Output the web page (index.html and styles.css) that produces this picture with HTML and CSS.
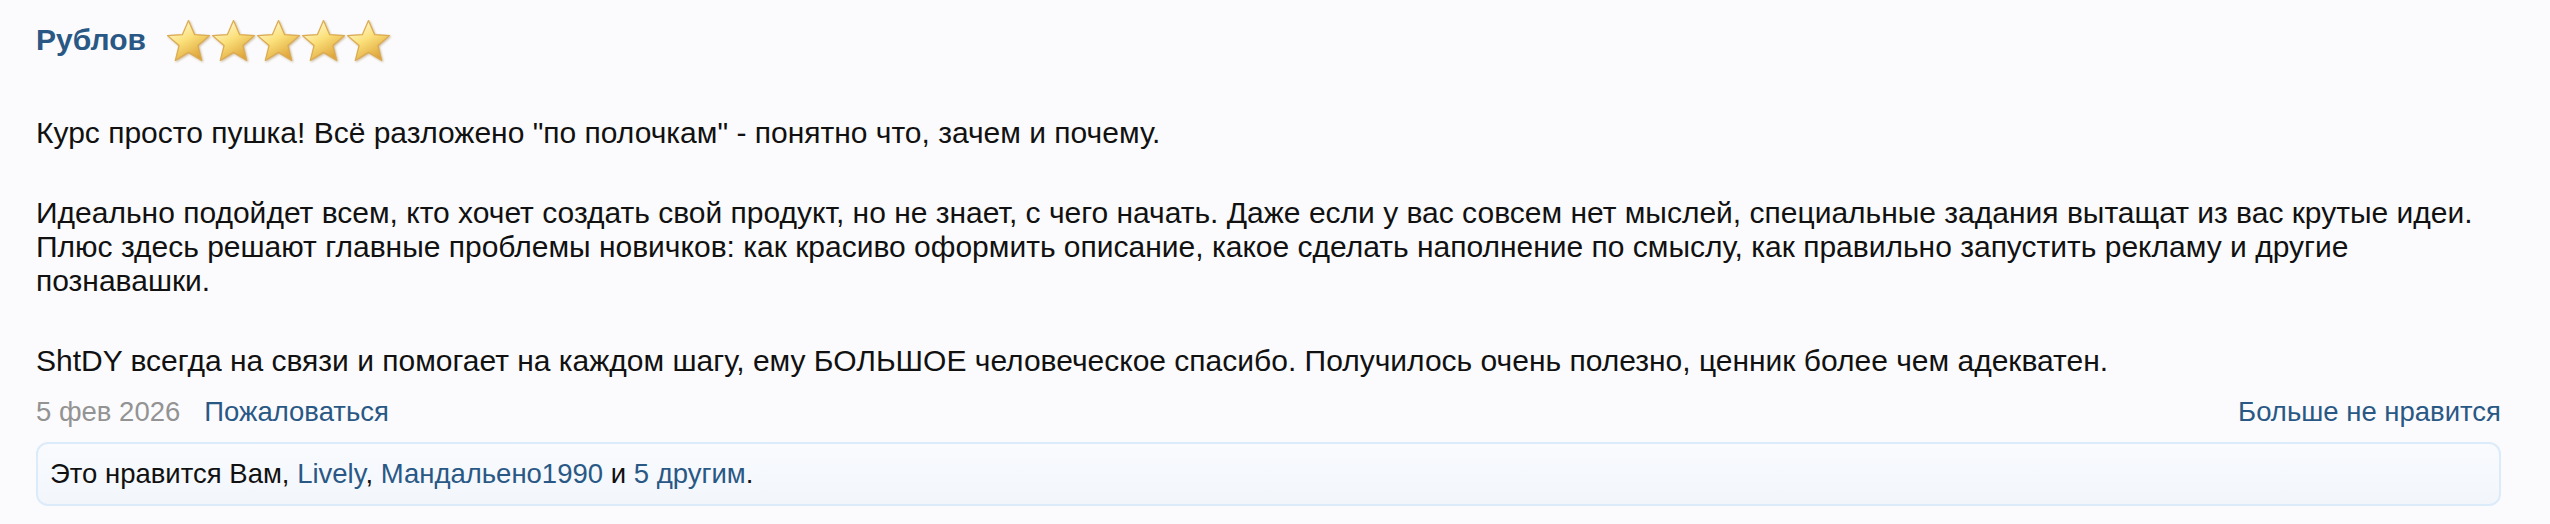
FILE: index.html
```html
<!DOCTYPE html>
<html lang="ru">
<head>
<meta charset="utf-8">
<link rel="stylesheet" href="styles.css">
</head>
<body>
<div class="review">
  <div class="head">
    <a class="name" href="#">Рублов</a>
    <div class="stars">
      <svg class="star" viewBox="0 0 44 42"><defs><linearGradient id="g" x1="0.2" y1="0" x2="0.8" y2="1"><stop offset="0" stop-color="#fffce0"/><stop offset="0.45" stop-color="#fbe07a"/><stop offset="1" stop-color="#d99a30"/></linearGradient></defs><path d="M22 1.5 L27.9 15.2 L42.5 16.2 L31.2 25.9 L34.9 40.5 L22 32.6 L9.1 40.5 L12.8 25.9 L1.5 16.2 L16.1 15.2 Z" fill="url(#g)" stroke="#dcaa50" stroke-width="1.2" stroke-linejoin="round"/></svg>
      <svg class="star" viewBox="0 0 44 42"><path d="M22 1.5 L27.9 15.2 L42.5 16.2 L31.2 25.9 L34.9 40.5 L22 32.6 L9.1 40.5 L12.8 25.9 L1.5 16.2 L16.1 15.2 Z" fill="url(#g)" stroke="#dcaa50" stroke-width="1.2" stroke-linejoin="round"/></svg>
      <svg class="star" viewBox="0 0 44 42"><path d="M22 1.5 L27.9 15.2 L42.5 16.2 L31.2 25.9 L34.9 40.5 L22 32.6 L9.1 40.5 L12.8 25.9 L1.5 16.2 L16.1 15.2 Z" fill="url(#g)" stroke="#dcaa50" stroke-width="1.2" stroke-linejoin="round"/></svg>
      <svg class="star" viewBox="0 0 44 42"><path d="M22 1.5 L27.9 15.2 L42.5 16.2 L31.2 25.9 L34.9 40.5 L22 32.6 L9.1 40.5 L12.8 25.9 L1.5 16.2 L16.1 15.2 Z" fill="url(#g)" stroke="#dcaa50" stroke-width="1.2" stroke-linejoin="round"/></svg>
      <svg class="star" viewBox="0 0 44 42"><path d="M22 1.5 L27.9 15.2 L42.5 16.2 L31.2 25.9 L34.9 40.5 L22 32.6 L9.1 40.5 L12.8 25.9 L1.5 16.2 L16.1 15.2 Z" fill="url(#g)" stroke="#dcaa50" stroke-width="1.2" stroke-linejoin="round"/></svg>
    </div>
  </div>
  <div class="text">
    <p>Курс просто пушка! Всё разложено "по полочкам" - понятно что, зачем и почему.</p>
    <p>Идеально подойдет всем, кто хочет создать свой продукт, но не знает, с чего начать. Даже если у вас совсем нет мыслей, специальные задания вытащат из вас крутые идеи.<br>Плюс здесь решают главные проблемы новичков: как красиво оформить описание, какое сделать наполнение по смыслу, как правильно запустить рекламу и другие<br>познавашки.</p>
    <p>ShtDY всегда на связи и помогает на каждом шагу, ему БОЛЬШОЕ человеческое спасибо. Получилось очень полезно, ценник более чем адекватен.</p>
  </div>
  <div class="meta">
    <div class="meta-left">
      <span class="date">5 фев 2026</span>
      <a class="link" href="#">Пожаловаться</a>
    </div>
    <a class="link" href="#">Больше не нравится</a>
  </div>
  <div class="likes">
    Это нравится Вам, <a class="link" href="#">Lively</a>, <a class="link" href="#">Мандальено1990</a> и <a class="link" href="#">5 другим</a>.
  </div>
</div>
</body>
</html>
```
FILE: styles.css
```css
html, body {
  margin: 0;
  background: #fbfbfd;
}
body {
  font-family: "Liberation Sans", Arial, sans-serif;
  color: #111;
}
a { text-decoration: none; }
.review {
  padding: 18px 49px 0 36px;
}
.head {
  display: flex;
  align-items: center;
  gap: 20px;
  height: 44px;
}
.name {
  font-size: 30px;
  font-weight: bold;
  color: #2a5885;
}
.stars {
  display: flex;
}
.star {
  width: 45px;
  height: 43px;
  display: block;
  filter: drop-shadow(1px 1px 1px rgba(150, 110, 40, 0.45));
}
.text {
  margin-top: 54px;
  font-size: 30px;
  line-height: 34px;
}
.text p {
  margin: 0 0 46px;
}
.text p:last-child { margin-bottom: 0; }
.meta {
  margin-top: 17px;
  display: flex;
  justify-content: space-between;
  font-size: 27.5px;
  line-height: 34px;
}
.meta-left {
  display: flex;
  gap: 24px;
}
.date { color: #939393; }
.link { color: #2a5885; }
.likes {
  margin-top: 13px;
  border: 2px solid #dcebf9;
  border-radius: 12px;
  background: linear-gradient(#f9fbfe, #f2f6fb);
  padding: 13px 12px;
  font-size: 27.5px;
  line-height: 34px;
  color: #111;
}
```
